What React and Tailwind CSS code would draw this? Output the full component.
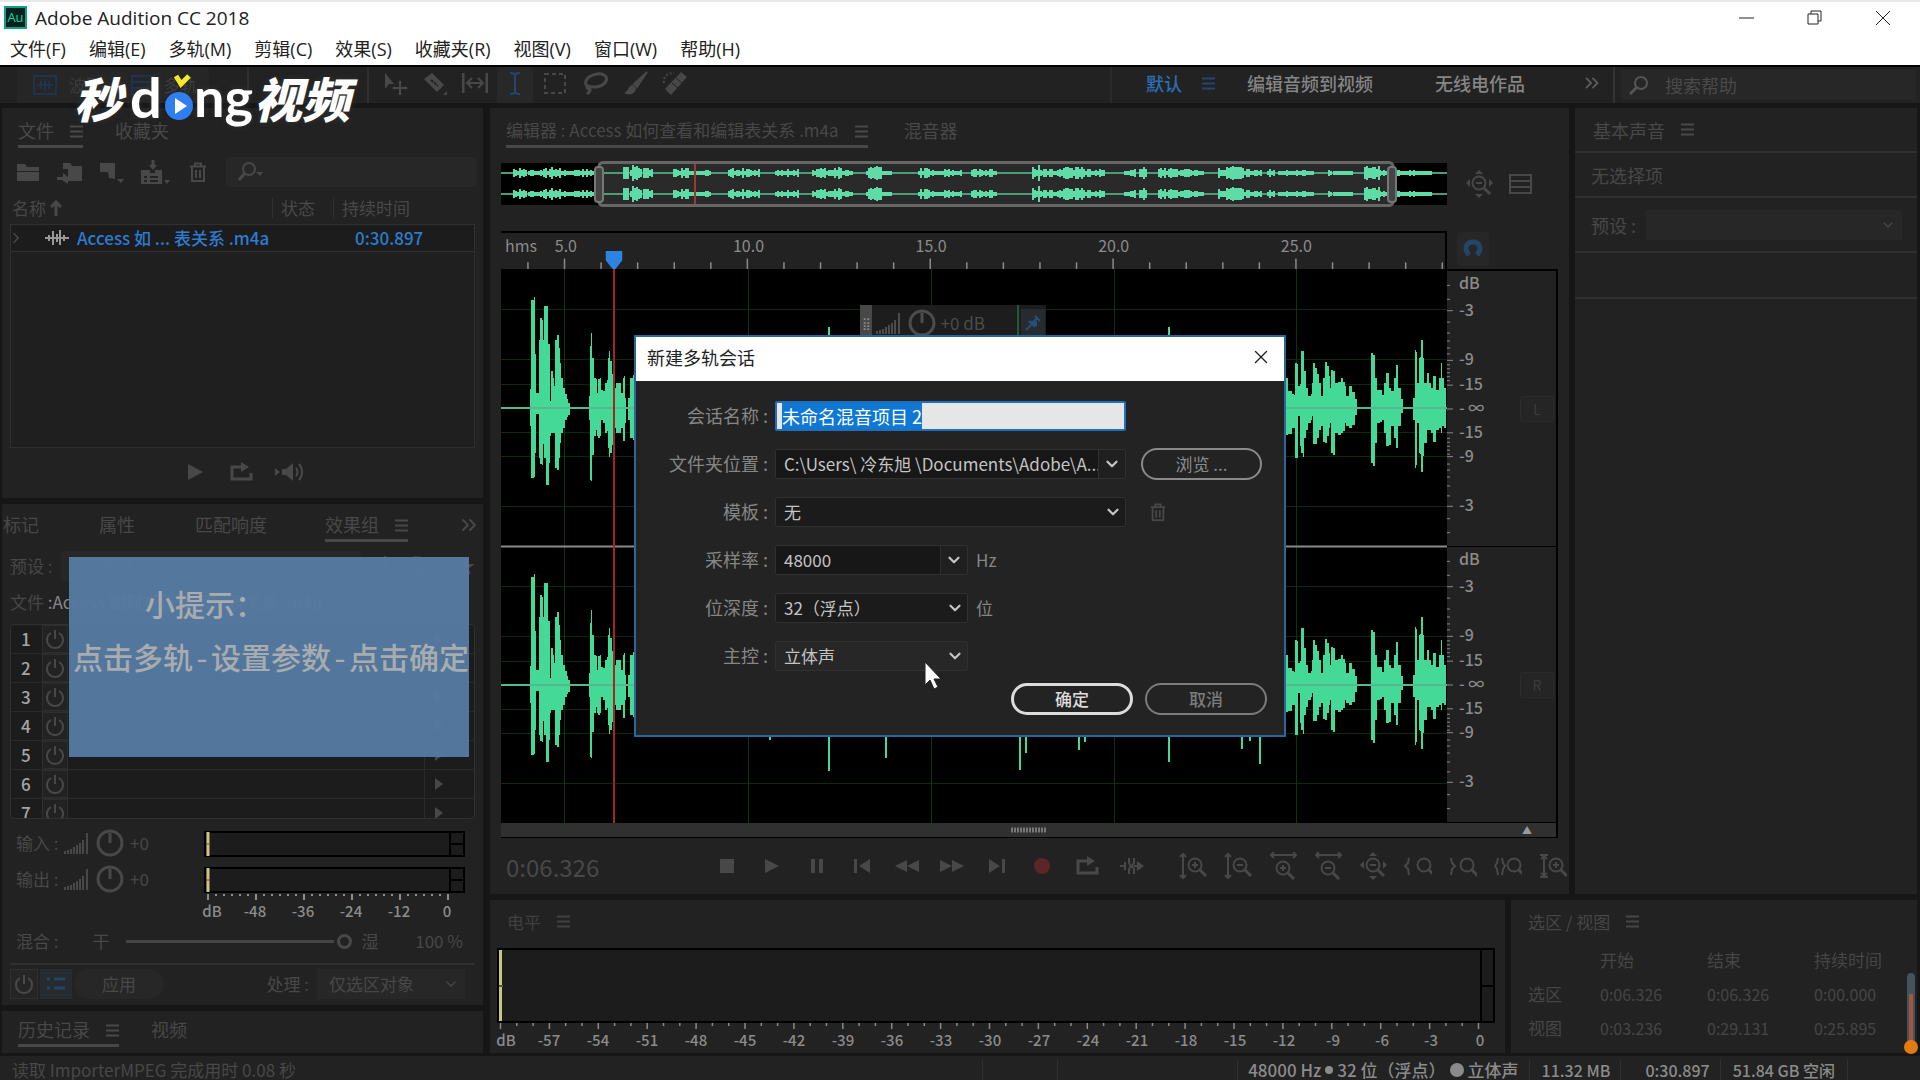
import React, { useEffect, useRef } from 'react';
import { ChevronDown, ChevronRight, ChevronsRight, X } from 'lucide-react';

const menus = ['文件(F)', '编辑(E)', '多轨(M)', '剪辑(C)', '效果(S)', '收藏夹(R)', '视图(V)', '窗口(W)', '帮助(H)'];

// [x, peak above, peak below] in plot units, shared by both channels
const wave = [
  [0, 1, 1], [28, 1, 1], [29, 19, 18], [30, 108, 70], [33, 111, 69], [34, 54, 45], [35, 15, 6], [37, 15, 6], [38, 68, 50],
  [39, 90, 56], [41, 88, 57], [42, 68, 36], [43, 102, 50], [45, 102, 77], [47, 64, 77], [48, 64, 55], [49, 7, 28], [50, 37, 25],
  [52, 30, 25], [53, 22, 25], [54, 68, 60], [56, 73, 62], [58, 60, 50], [59, 45, 35], [60, 30, 25], [62, 20, 20], [64, 14, 12],
  [66, 9, 9], [67, 5, 7], [69, 1, 1], [87, 1, 1], [88, 12, 12], [89, 62, 72], [90, 75, 73], [91, 50, 47], [93, 30, 28], [95, 29, 22],
  [96, 15, 28], [97, 29, 30], [99, 30, 28], [100, 18, 12], [102, 17, 15], [104, 25, 25], [106, 28, 23], [107, 50, 40], [108, 57, 49],
  [109, 47, 45], [111, 34, 37], [112, 30, 30], [114, 20, 20], [115, 25, 25], [119, 25, 25], [120, 15, 20], [122, 30, 33], [123, 32, 33],
  [124, 10, 15], [125, 1, 1], [127, 10, 12], [129, 30, 30], [132, 33, 32], [140, 20, 20], [266, 20, 20], [268, 40, 55], [270, 20, 20],
  [325, 30, 40], [327, 81, 86], [329, 60, 45], [330, 20, 20], [383, 20, 20], [384, 40, 73], [386, 20, 20], [516, 30, 40], [518, 100, 85],
  [520, 40, 30], [524, 40, 68], [526, 30, 30], [575, 20, 20], [577, 40, 65], [579, 20, 20], [583, 30, 57], [585, 20, 20], [666, 20, 20],
  [667, 81, 77], [669, 20, 20], [738, 20, 20], [740, 40, 64], [742, 20, 20], [748, 30, 56], [750, 30, 30], [758, 40, 79], [760, 20, 20],
  [784, 30, 27], [787, 17, 26], [791, 14, 20], [793, 13, 20], [794, 45, 50], [796, 44, 50], [797, 22, 8], [799, 24, 38], [800, 57, 45],
  [802, 57, 49], [803, 37, 30], [805, 20, 22], [807, 12, 15], [810, 14, 12], [811, 25, 8], [812, 45, 36], [814, 40, 36], [816, 34, 30],
  [818, 25, 22], [820, 12, 18], [822, 30, 34], [824, 46, 35], [826, 42, 28], [828, 32, 20], [829, 20, 15], [830, 38, 45], [832, 37, 47],
  [834, 25, 25], [837, 26, 27], [840, 30, 25], [842, 26, 23], [844, 22, 15], [845, 12, 18], [848, 22, 20], [851, 16, 17], [854, 9, 7],
  [856, 1, 1], [869, 1, 1], [870, 55, 55], [872, 53, 58], [874, 30, 35], [876, 18, 15], [879, 18, 14], [881, 13, 12], [883, 25, 25],
  [885, 35, 38], [888, 20, 37], [890, 17, 18], [893, 30, 30], [895, 43, 40], [897, 20, 18], [900, 9, 5], [902, 1, 1], [911, 1, 1],
  [912, 10, 12], [914, 58, 60], [915, 56, 57], [916, 25, 15], [918, 50, 45], [919, 51, 46], [920, 68, 64], [922, 50, 48], [923, 25, 35],
  [926, 35, 22], [928, 25, 22], [930, 20, 25], [932, 32, 34], [935, 18, 22], [938, 30, 20], [940, 45, 25], [941, 30, 18], [943, 20, 20],
  [945, 30, 29],
];

// [start, end, amplitude] of each burst in the overview strip
const bursts = [
  [13, 27, 6], [28, 43, 3], [43, 60, 6], [60, 96, 4], [123, 128, 9], [130, 141, 9], [143, 152, 6], [173, 189, 5], [189, 211, 3],
  [228, 243, 5], [244, 259, 4], [275, 298, 4], [312, 328, 5], [328, 341, 6], [341, 352, 3], [366, 382, 7], [382, 391, 3], [418, 432, 6],
  [432, 461, 4], [471, 496, 4], [532, 541, 9], [541, 561, 5], [561, 591, 6], [591, 605, 4], [624, 636, 4], [639, 647, 6], [658, 677, 6],
  [678, 704, 4], [718, 743, 7], [744, 761, 4], [767, 775, 6], [778, 814, 3], [828, 832, 7], [833, 852, 3], [864, 879, 7], [879, 888, 4],
  [896, 907, 3], [907, 914, 5], [914, 932, 2],
];

const wavePath = (mid) => {
  let top = `M0 ${mid}`;
  let bottom = `M0 ${mid}`;
  wave.forEach(([x, up, down]) => {
    top += `H${x}V${mid - up}`;
    bottom += `H${x}V${mid + down}`;
  });
  return `${top}V${mid}Z${bottom}V${mid}Z`;
};

const overviewPath = (mid) =>
  bursts
    .map(([start, end, amp]) => {
      let d = '';
      for (let x = start; x < end; x += 2) {
        const n = Math.abs(Math.sin(x * 12.9898) * 43758) % 1;
        const h = Math.max(2, Math.round(amp * (0.3 + 0.7 * n)));
        d += `M${x} ${mid - h}V${mid + h}`;
      }
      return d;
    })
    .join('');

const dbMarks = [
  ['-3', 40], ['-9', 90], ['-15', 115], ['- ∞', 139], ['-15', 163], ['-9', 187], ['-3', 237],
];
const dbTicks = [14, 28, 51, 62, 70, 77, 83, 94, 98, 102, 106, 110, 168, 172, 176, 180, 184, 194, 200, 207, 216, 226, 249, 263];

function MenuLines({ className = '' }) {
  return (
    <svg className={`w-[13px] h-[13px] shrink-0 ${className}`} viewBox="0 0 13 13" stroke="currentColor" strokeWidth="2">
      <path d="M0 1.5h13M0 6.5h13M0 11.5h13" />
    </svg>
  );
}

function Tab({ children, active, size = 'text-lg' }) {
  return (
    <button className={`flex items-start gap-4 h-[30px] leading-6 border-b-3 ${size} ${active ? 'border-[#484848]' : 'border-transparent'}`}>
      {children}
      {active && <MenuLines className="mt-[7px]" />}
    </button>
  );
}

function Icon({ children, size = 'size-6', box = '0 0 24 24', className = '' }) {
  return (
    <svg className={`${size} shrink-0 ${className}`} viewBox={box} fill="none" stroke="currentColor" strokeWidth="2">
      {children}
    </svg>
  );
}

function Trash({ className = '' }) {
  return (
    <Icon className={className}>
      <path d="M4 6.5h16M9 6V3.5h6V6M6 7v14h12V7M10 10v8M14 10v8" />
    </Icon>
  );
}

function Power() {
  return (
    <Icon size="size-5" box="0 0 20 20">
      <path d="M6 4a8 8 0 1 0 8 0M10 1v9" />
    </Icon>
  );
}

function Bars() {
  return (
    <svg className="w-6 h-[22px] shrink-0" viewBox="0 0 24 22" stroke="currentColor" strokeWidth="2">
      <path d="M1 22v-3M4 22v-4M7 22v-5M10 22v-7M13 22v-9M16 22v-11M19 22V8M23 22V1" />
    </svg>
  );
}

function Knob() {
  return (
    <Icon size="size-7" box="0 0 28 28" className="ml-2">
      <circle cx="14" cy="14" r="12" strokeWidth="3" />
      <path d="M14 4v10" strokeWidth="3" />
    </Icon>
  );
}

function Loop() {
  return (
    <Icon>
      <path d="M7 7H3v12h19v-6M7 7h7" strokeWidth="3" />
      <path d="M12 2l8 5-8 5z" fill="currentColor" stroke="none" />
    </Icon>
  );
}

function Lens({ cx = 12, sign }) {
  return (
    <>
      <circle cx={cx} cy="13" r="6.5" />
      <path d={`M${cx + 5} 18l6 6`} strokeWidth="3" />
      {sign && <path d={`M${cx - 3} 13h6`} />}
      {sign === '+' && <path d={`M${cx} 10v6`} />}
    </>
  );
}

const zoomTools = [
  { name: '垂直放大', body: <><Lens cx={16} sign="+" /><path d="M4 2v24M1 5l3-3 3 3M1 23l3 3 3-3" /></> },
  { name: '垂直缩小', body: <><Lens cx={16} sign="-" /><path d="M4 2v24M1 5l3-3 3 3M1 23l3 3 3-3" /></> },
  { name: '水平放大', body: <><g transform="translate(0 3)"><Lens cx={14} sign="+" /></g><path d="M2 3h25M5 0L2 3l3 3M24 0l3 3-3 3" /></> },
  { name: '水平缩小', body: <><g transform="translate(0 3)"><Lens cx={14} sign="-" /></g><path d="M2 3h25M5 0L2 3l3 3M24 0l3 3-3 3" /></> },
  { name: '全部缩小', body: <><Lens cx={14} sign="-" /><path d="M14 0l4 4h-8zM14 28l4-4h-8zM1 13l4-4v8zM28 13l-4-4v8z" fill="currentColor" stroke="none" /></> },
  { name: '放大入点', body: <><Lens cx={20} /><path d="M5 6l-1 5-3 3 3 3 1 6" /></> },
  { name: '放大出点', body: <><Lens cx={18} /><path d="M2 6l1 5 3 3-3 3-1 6" /></> },
  { name: '缩放至选区', body: <><Lens cx={20} /><path d="M4 6l-1 5-2 3 2 3 1 6M8 6l1 5 2 3-2 3-1 6" /></> },
  { name: '缩放重置', body: <><Lens cx={17} sign="+" /><path d="M5 3v22M1 3h8M1 25h8M2 7l3-3 3 3M2 21l3 3 3-3" /></> },
];

const transport = [
  { name: '停止', body: <path d="M5 5h14v14H5z" fill="currentColor" stroke="none" /> },
  { name: '播放', body: <path d="M5 5l14 7-14 7z" fill="currentColor" stroke="none" /> },
  { name: '暂停', body: <path d="M6 5h4v14H6zM14 5h4v14h-4z" fill="currentColor" stroke="none" /> },
  { name: '上一个', body: <path d="M4 5h3v14H4zM20 5v14L9 12z" fill="currentColor" stroke="none" /> },
  { name: '快退', body: <path d="M12 6v12L0 12zM24 6v12l-12-6z" fill="currentColor" stroke="none" /> },
  { name: '快进', body: <path d="M0 6v12l12-6zM12 6v12l12-6z" fill="currentColor" stroke="none" /> },
  { name: '下一个', body: <path d="M4 5v14l11-7zM17 5h3v14h-3z" fill="currentColor" stroke="none" /> },
  { name: '录制', body: <circle cx="12" cy="12" r="8" fill="#5c2628" stroke="none" /> },
  { name: '循环播放', body: <><path d="M7 7H3v12h19v-6M7 7h7" strokeWidth="3" /><path d="M12 2l8 5-8 5z" fill="currentColor" stroke="none" /></> },
  { name: '跳过选区', body: <><path d="M0 12h6M5 8v8M9 4v5l2 3-2 3v5M14 4v5l-2 3 2 3v5M14 12h6" /><path d="M17 7l7 5-7 5z" fill="currentColor" stroke="none" /></> },
];

const tools = [
  { name: '移动', body: <><path d="M3 2l9 11H7l-4 5z" fill="currentColor" stroke="none" /><path d="M18 11v12M12 17h12" /><path d="M18 9l2 3h-4zM18 25l2-3h-4zM10 17l3-2v4zM26 17l-3-2v4z" fill="currentColor" stroke="none" /></> },
  { name: '切断', body: <><path d="M2 8l8-6 12 12-7 7z" fill="currentColor" stroke="none" /><path d="M9 9l7 6" stroke="#222222" strokeDasharray="3 1" /><path d="M25 20v4h-4z" fill="currentColor" stroke="none" /></> },
  { name: '滑动', body: <><path d="M1 2v20M25 2v20" strokeWidth="3" /><path d="M5 12h16M10 7l-5 5 5 5M16 7l5 5-5 5" strokeWidth="2" /></> },
  { name: '时间选择', active: true, body: <path d="M8 2c3 0 5 1 5 3 0-2 2-3 5-3M13 5v15M8 23c3 0 5-1 5-3 0 2 2 3 5 3" /> },
  { name: '框选', body: <path d="M3 3h20v19H3z" strokeDasharray="4 3" /> },
  { name: '套索', body: <path d="M9 17c-5-1-7-5-4-9s12-7 17-4 2 9-4 11-9 1-11 0-3 3 0 3 0 3-2 5" strokeWidth="3" /> },
  { name: '画笔', body: <><path d="M25 1L12 13l3 3z" fill="currentColor" /><path d="M11 14c-5 0-4 6-9 8 5 3 12 1 12-5z" fill="currentColor" stroke="none" /></> },
  { name: '修复', body: <><path d="M19 1l6 5L9 24l-6-6z" fill="currentColor" stroke="none" /><path d="M2 12c-1-6 3-10 10-10" strokeDasharray="2 2" /><path d="M14 7l6 5M10 12l6 5" stroke="#222222" strokeWidth="1" /></> },
];

function Meter() {
  return (
    <svg className="block w-full h-[26px]" viewBox="0 0 261 26" preserveAspectRatio="none">
      <path d="M1 1h259v24H1z" fill="#1c1c1c" stroke="#000" strokeWidth="2" />
      <path d="M246 1v24M246 13h14" stroke="#000" strokeWidth="2" />
      <path d="M4 1v24" stroke="#c9c77e" strokeWidth="3" />
      <path d="M2 13h4" stroke="#5a5a35" />
    </svg>
  );
}

function TitleBar() {
  return (
    <header className="bg-white text-[#222] border-t-2 border-[#e8e8e8] shrink-0 font-['Open_Sans','Noto_Sans_CJK_SC',sans-serif]">
      <div className="flex items-center h-[31px] pl-1 pr-[29px]">
        <div className="w-[23px] h-[23px] bg-[#06211c] border-2 border-[#0fa287] text-[#12d6ae] text-[13px] leading-[18px] text-center font-medium">Au</div>
        <h1 className="ml-2 text-[19px] leading-6">Adobe Audition CC 2018</h1>
        <div className="ml-auto flex items-center gap-[52px]">
          <button aria-label="最小化"><Icon size="size-4" box="0 0 16 16"><path d="M0 8h15" strokeWidth="1" /></Icon></button>
          <button aria-label="还原"><Icon size="size-4" box="0 0 16 16"><path d="M1 4h10v10H1zM4 4V1h10v10h-3" strokeWidth="1" /></Icon></button>
          <button aria-label="关闭"><Icon size="size-4" box="0 0 16 16"><path d="M1 1l14 14M15 1L1 15" strokeWidth="1" /></Icon></button>
        </div>
      </div>
      <nav className="flex items-center gap-[3px] h-8 text-lg">
        {menus.map((m) => (
          <button key={m} className="px-[10px]">{m}</button>
        ))}
      </nav>
    </header>
  );
}

function Toolbar() {
  return (
    <div className="flex items-center h-[38px] border-t-2 border-black bg-[#222222] shrink-0 pr-1">
      <div className="flex items-center h-full w-[249px] pl-[17px] border-r-2 border-[#303030]">
        <button className="flex items-center gap-3 h-full px-4 bg-[#262626] text-[#3c3c3c]">
          <Icon className="text-[#1d3350]"><path d="M1 3h22v18H1zM4 12h16M8 8v8M12 6v12M16 8v8" /></Icon>
          波形
        </button>
        <button className="flex items-center gap-2 h-full px-3 bg-[#262626] text-[#3c3c3c]">
          <Icon className="text-[#1d3350]"><path d="M1 3h22v18H1zM1 9h22M1 15h22" /></Icon>
          多轨
        </button>
      </div>
      <div className="flex items-center h-full ml-[118px] pl-2 gap-1 border-l-2 border-[#303030] text-[#484848]">
        {tools.map((t) => (
          <button
            key={t.name}
            aria-label={t.name}
            className={`flex items-center justify-center w-9 h-9 pb-1 ${t.active ? 'bg-[#282828] text-[#23486f]' : ''}`}
          >
            <Icon size="w-[26px] h-6" box="0 0 26 24">{t.body}</Icon>
          </button>
        ))}
      </div>
      <div className="ml-auto flex items-center h-full pl-[34px] border-l-2 border-[#2a2a2a] text-lg leading-6 text-[#858585]">
        <div className="flex items-center pb-1 font-medium">
          <button className="flex items-center gap-5 text-[#2b6fb5]">
            默认
            <MenuLines className="text-[#22476e]" />
          </button>
          <button className="ml-8">编辑音频到视频</button>
          <button className="ml-[62px]">无线电作品</button>
          <button aria-label="更多" className="ml-14 mr-2.5 text-[#5c5c5c]"><ChevronsRight size={22} /></button>
        </div>
        <label className="flex items-center h-full w-[303px] pl-1.5 border-l-2 border-[#333]">
          <span className="flex items-center gap-4 h-[30px] w-full px-2 bg-[#272727] text-[#4a4a4a]">
            <Icon size="size-5" box="0 0 20 20" className="text-[#555]"><circle cx="12" cy="8" r="6" /><path d="M8 12l-7 7" strokeWidth="3" /></Icon>
            <input aria-label="搜索帮助" placeholder="搜索帮助" className="w-full bg-transparent outline-none placeholder:text-[#4a4a4a]" />
          </span>
        </label>
      </div>
    </div>
  );
}

function FilesPanel() {
  return (
    <section className="flex flex-col h-[390px] bg-[#222222] pb-0.5 shrink-0 text-[#484848]">
      <div className="flex items-center gap-[32px] pl-4 pt-[10px]">
        <Tab active>文件</Tab>
        <Tab>收藏夹</Tab>
      </div>
      <div className="flex items-center gap-4 mt-2 h-8 pl-3.5 pr-1.5">
        <button aria-label="打开"><Icon><path d="M1 4h8l2 3h12v4H1zM1 12h22v9H1z" fill="currentColor" stroke="none" /></Icon></button>
        <button aria-label="导入"><Icon size="w-[26px] h-6" box="0 0 26 24"><path d="M7 3h7l2 3h10v15H12v3l-6-4H1v-3h6v-4l5 4V9H7z" fill="currentColor" stroke="none" /></Icon></button>
        <button aria-label="新建"><Icon size="w-[26px] h-6" box="0 0 26 24"><path d="M2 3h15v16l-6-1-1-6H2zM19 19h7l-3 4z" fill="currentColor" stroke="none" /></Icon></button>
        <button aria-label="插入"><Icon size="w-[30px] h-6" box="0 0 30 24"><path d="M1 10h9v3h5v-3h7v14H1zM24 20h6l-3 4zM9 5h8l-4 5z" fill="currentColor" stroke="none" /><path d="M13 0v6" strokeWidth="3" /><path d="M4 17h3M10 17h8M4 21h3M10 21h8" stroke="#222222" /></Icon></button>
        <button aria-label="删除"><Trash /></button>
        <label className="flex items-center flex-1 h-[30px] pl-3 bg-[#272727] rounded-sm">
          <Icon size="w-[26px] h-5" box="0 0 26 20"><circle cx="11" cy="7" r="6" /><path d="M7 11l-6 7" strokeWidth="3" /><path d="M18 10h7l-3 4z" fill="currentColor" stroke="none" /></Icon>
          <input aria-label="搜索文件" className="w-full bg-transparent outline-none" />
        </label>
      </div>
      <table className="mt-1 mx-2 text-left table-fixed border-separate border-spacing-0">
        <thead>
          <tr className="h-8">
            <th className="font-normal pl-0.5">
              <span className="flex items-center gap-1">
                名称
                <Icon size="w-3 h-4" box="0 0 12 16"><path d="M6 16V3M1 7l5-5 5 5" strokeWidth="3" /></Icon>
              </span>
            </th>
            <th className="font-normal w-[61px]"><span className="block pl-2 leading-5 border-l border-[#303030]">状态</span></th>
            <th className="font-normal w-[142px]"><span className="block pl-2 leading-5 border-l border-[#303030]">持续时间</span></th>
          </tr>
        </thead>
        <tbody>
          <tr className="h-[28px] bg-[#1c1c1c] font-medium text-[#2e7bd0]">
            <td className="border-y border-l border-[#303030]">
              <span className="flex items-center">
                <ChevronRight size={18} className="-ml-1 text-[#484848]" />
                <Icon size="w-6 h-5" box="0 0 24 20" className="ml-5 mr-2 text-[#999]"><path d="M0 10h24M4 7v6M8 3v14M12 6v8M15 2v15M19 7v6" /></Icon>
                Access 如 ... 表关系 .m4a
              </span>
            </td>
            <td className="border-y border-[#303030]"></td>
            <td className="border-y border-r border-[#303030] pl-[22px]">0:30.897</td>
          </tr>
        </tbody>
      </table>
      <div className="flex-1 mx-2 border border-t-0 border-[#2e2e2e] bg-[#1f1f1f]"></div>
      <div className="flex items-center justify-center gap-[22px] h-12">
        <button aria-label="播放"><Icon><path d="M5 4l15 8-15 8z" fill="currentColor" stroke="none" /></Icon></button>
        <button aria-label="循环"><Loop /></button>
        <button aria-label="自动播放"><Icon size="w-7 h-6" box="0 0 28 24"><path d="M0 8l5 4-5 4zM7 9h4l7-6v18l-7-6H7z" fill="currentColor" stroke="none" /><path d="M21 8c2 2 2 6 0 8M24 4c4 4 4 12 0 16" /></Icon></button>
      </div>
    </section>
  );
}

function EffectsPanel() {
  return (
    <section className="flex flex-col flex-1 min-h-0 bg-[#222222] text-[#484848]">
      <div className="flex items-center pt-2 pl-px pr-0.5">
        <Tab>标记</Tab>
        <span className="ml-[60px]"><Tab>属性</Tab></span>
        <span className="ml-[60px]"><Tab>匹配响度</Tab></span>
        <span className="ml-[58px]"><Tab active>效果组</Tab></span>
        <button aria-label="更多" className="ml-auto pb-1"><ChevronsRight size={24} /></button>
      </div>
      <label className="flex items-center gap-2 mt-2 h-8 px-2">
        预设 :
        <select aria-label="预设" className="h-[30px] w-[300px] pl-6 appearance-none bg-[#272727]"><option>（默认）</option></select>
        <Icon className="ml-1"><path d="M12 2v12M7 9l5 5 5-5M2 16v6h20v-6" /></Icon>
        <Trash />
        <span className="ml-auto text-xl">★</span>
      </label>
      <p className="mt-1 h-8 px-2 leading-8">文件 <span className="text-[#888]">:Access 如何查看和编辑表关系 .m4a</span></p>
      <ol className="mt-1.5 mx-2 h-[195px] overflow-hidden border border-[#303030] rounded-sm bg-[#1c1c1c] shrink-0">
        {[1, 2, 3, 4, 5, 6, 7].map((n) => (
          <li key={n} className="flex items-center h-[29px] leading-5 border-b border-[#2a2a2a]">
            <span className="w-[28px] pl-2.5 font-medium text-[#a5a5a5]">{n}</span>
            <button aria-label={`开关 ${n}`} className="flex items-center justify-center ml-[3px] w-[26px] h-7 bg-[#222] border border-[#2e2e2e]"><Power /></button>
            <button aria-label={`效果 ${n}`} className="ml-auto mr-[18px] flex items-center w-8 h-full pl-2 border-l border-[#2a2a2a]">
              <Icon size="size-4" box="0 0 16 16"><path d="M2 2l8 6-8 6z" fill="currentColor" stroke="none" /></Icon>
            </button>
          </li>
        ))}
      </ol>
      <div className="flex pl-3.5 pr-[18px] pt-1.5">
        <div className="w-[188px] shrink-0">
          {['输入', '输出'].map((t) => (
            <div key={t} className="flex items-center h-9">
              <span className="w-12">{t} :</span>
              <Bars />
              <Knob />
              <span className="ml-1.5">+0</span>
            </div>
          ))}
        </div>
        <div className="flex-1 pt-1.5 text-[15px] font-medium text-[#8b8b8b]">
          <Meter />
          <div className="h-[10px]"></div>
          <Meter />
          <svg className="block w-full h-2" viewBox="0 0 261 8" preserveAspectRatio="none" stroke="#8b8b8b" strokeWidth="2">
            {Array.from({ length: 31 }, (_, i) => <path key={i} d={`M${4 + i * 8} 1v${i % 6 === 0 ? 6 : 2}`} />)}
          </svg>
          <div className="relative h-5">
            {['dB', '-48', '-36', '-24', '-12', '0'].map((t, i) => (
              <span key={t} className="absolute -translate-x-1/2 leading-5" style={{ left: `${(i === 0 ? 8 : 3 + i * 48) / 2.61}%` }}>{t}</span>
            ))}
          </div>
        </div>
      </div>
      <label className="flex items-center h-9 mt-0.5 pl-3.5 pr-5">
        混合 :
        <span className="ml-[34px]">干</span>
        <span className="relative flex items-center ml-4 w-[228px] h-4">
          <span className="w-[208px] h-[3px] bg-[#444]"></span>
          <span className="ml-[3px] size-[15px] shrink-0 rounded-full border-3 border-[#484848]"></span>
          <input type="range" aria-label="混合" defaultValue="100" className="absolute inset-0 w-full opacity-0" />
        </span>
        <span className="ml-2">湿</span>
        <span className="ml-auto">100 %</span>
      </label>
      <div className="flex items-center mx-2 mt-1 pt-1 border-t-2 border-[#303030]">
        <button aria-label="效果开关" className="flex items-center justify-center w-7 h-[30px] border border-[#303030] bg-[#252525]"><Power /></button>
        <button aria-label="列表" className="flex items-center justify-center ml-0.5 w-8 h-[30px] bg-[#272a2e] text-[#234464]">
          <Icon size="size-5" box="0 0 20 20" ><path d="M1 5h3M8 5h11M1 14h3M8 14h11" strokeWidth="3" /></Icon>
        </button>
        <button className="ml-0.5 w-[90px] h-[30px] rounded-full bg-[#272727]">应用</button>
        <label className="ml-auto mr-2.5 flex items-center gap-2">
          处理 :
          <span className="relative">
            <select className="w-[148px] h-[30px] pl-3 appearance-none bg-[#272727]"><option>仅选区对象</option></select>
            <ChevronDown size={16} className="absolute right-1.5 top-[7px]" />
          </span>
        </label>
      </div>
    </section>
  );
}

function Plot() {
  return (
    <div className="relative flex-1 min-h-0 bg-black">
      <svg className="absolute inset-0 w-full h-full" viewBox="0 0 946 554" preserveAspectRatio="none">
        {[0, 277].map((y) => (
          <path key={y} stroke="#0b2a0d" d={[40, 90, 115, 163, 187, 237].map((v) => `M0 ${y + v + 0.5}H946`).join('')} />
        ))}
        <path stroke="#0e3311" d="M63.5 0V554M247.5 0V554M430.5 0V554M613.5 0V554M795.5 0V554" />
        <path d="M0 277.5H946" stroke="#8a8a8a" strokeWidth="2" />
        <path d={wavePath(139)} fill="#45d998" />
        <path d={wavePath(416)} fill="#45d998" />
        <path d="M0 139H946M0 416H946" stroke="#56b88e" strokeWidth="2" />
        <path d="M113 0V554" stroke="#a3261f" strokeWidth="2" />
      </svg>
      <div className="absolute left-[38%] top-9 flex items-center h-9 w-[186px] bg-[#1d1d1d] text-[#4c4c4c]">
        <span className="flex items-center justify-center w-3 h-full bg-[#484848] text-[#888] text-xs">⣿</span>
        <span className="ml-1"><Bars /></span>
        <Knob />
        <span className="ml-1">+0 dB</span>
        <span className="ml-auto w-0.5 h-full bg-[#1f5a40]"></span>
        <button aria-label="固定" className="ml-0.5 mr-px flex items-center justify-center w-6 h-7 bg-[#272a2e] text-[#24507d]">
          <Icon size="size-4" box="0 0 16 16"><path d="M1 15l5-5M4 6l6 6M7 8l5-5M10 1l5 5M6 7h5v3z" strokeWidth="2" /></Icon>
        </button>
      </div>
    </div>
  );
}

function DbScale() {
  return (
    <div className="flex flex-col w-[111px] border-t-2 border-r-2 border-black text-[#8b8b8b]">
      {['L', 'R'].map((ch) => (
        <div key={ch} className="relative flex-1 border-b border-black">
          <svg className="absolute inset-0 w-2 h-full" viewBox="0 0 8 277" preserveAspectRatio="none" stroke="#8b8b8b">
            <path d={dbTicks.map((y) => `M0 ${y + 0.5}h3`).join('')} />
            <path d={dbMarks.map(([, y]) => `M0 ${y}h6`).join('')} />
          </svg>
          <span className="absolute left-3 top-[5%] -translate-y-[70%] leading-4 text-base font-medium">dB</span>
          {dbMarks.map(([t, y]) => (
            <span key={y} className="absolute left-3 -translate-y-[60%] leading-4 text-base font-medium" style={{ top: `${y / 2.77}%` }}>{t}</span>
          ))}
          <button className="absolute right-0.5 top-1/2 -translate-y-1/2 w-[34px] h-[26px] border border-[#2b2b2b] bg-[#252525] text-[#3c3c3c] text-sm rounded-xs">{ch}</button>
        </div>
      ))}
    </div>
  );
}

function EditorPanel() {
  return (
    <section className="flex flex-col flex-1 min-w-0 bg-[#222222] text-[#484848]">
      <div className="flex items-center gap-9 pl-4 pt-[10px]">
        <Tab active size="text-[17px]">编辑器 : Access 如何查看和编辑表关系 .m4a</Tab>
        <Tab>混音器</Tab>
      </div>
      <div className="flex items-center mt-[13px] pl-[11px] pr-[11px]">
        <svg className="block flex-1 min-w-0 h-[46px]" viewBox="0 0 946 46" preserveAspectRatio="none">
          <path d="M0 2h946v42H0z" fill="#000" />
          <rect x="98" y="1.5" width="794" height="43" rx="4" fill="#2a2a2a" stroke="#666" strokeWidth="3" />
          <path d="M0 12h946M0 33h946" stroke="#4b9c78" strokeWidth="2" />
          <path d={overviewPath(12)} stroke="#5fdba8" strokeWidth="2" />
          <path d={overviewPath(33)} stroke="#5fdba8" strokeWidth="2" />
          <path d="M194 3v40" stroke="#9a3a30" strokeWidth="2" />
          <rect x="94" y="6" width="8" height="35" rx="3" fill="#444" stroke="#777" strokeWidth="2" />
          <rect x="887" y="6" width="8" height="35" rx="3" fill="#444" stroke="#777" strokeWidth="2" />
        </svg>
        <div className="flex items-center gap-4 w-[111px] pl-[18px]">
          <button aria-label="全部缩小"><Icon size="w-7 h-7" box="0 0 28 28">{zoomTools[4].body}</Icon></button>
          <button aria-label="列表视图"><Icon size="w-6 h-6" box="0 0 24 24"><path d="M1 3h21v18H1zM1 9h21M1 15h21" /></Icon></button>
        </div>
      </div>
      <div className="flex mt-6 pl-[11px] pr-[11px]">
        <div className="relative flex-1 min-w-0 h-[38px] border-t-2 border-r-2 border-black text-base text-[#8b8b8b]">
          <svg className="absolute inset-0 w-full h-full" viewBox="0 0 946 38" preserveAspectRatio="none" stroke="#8b8b8b" strokeWidth="1.5">
            {Array.from({ length: 26 }, (_, i) => (
              <path key={i} d={`M${27 + i * 36.65} 38v-${i % 5 === 1 ? 11 : 7}`} />
            ))}
          </svg>
          <span className="absolute left-1 top-0 leading-6">hms</span>
          {['5.0', '10.0', '15.0', '20.0', '25.0'].map((t, i) => (
            <span key={t} className="absolute top-0 -translate-x-1/2 leading-6" style={{ left: `${(65 + i * 183) / 9.46}%` }}>{t}</span>
          ))}
          <svg className="absolute bottom-0 left-[12%] -translate-x-1/2 w-[17px] h-[18px]" viewBox="0 0 17 18">
            <path d="M0 0h17v9l-7 9H7L0 9z" fill="#2d83e0" />
          </svg>
        </div>
        <div className="w-[111px] pl-2.5">
          <button aria-label="对齐" className="flex items-center justify-center w-8 h-[34px] mt-px bg-[#272727] text-[#22456a] rounded-sm">
            <Icon size="size-5" box="0 0 20 20"><path d="M6 16c-6-7-2-13 4-13s10 6 4 13" strokeWidth="5" /></Icon>
          </button>
        </div>
      </div>
      <div className="flex flex-1 min-h-0 mx-[11px]">
        <Plot />
        <DbScale />
      </div>
      <div className="flex items-center justify-center relative h-[15px] mx-[11px] bg-[#303030] border-b border-r-2 border-black">
        <svg className="w-9 h-[6px]" viewBox="0 0 36 6" stroke="#777" strokeWidth="5" strokeDasharray="2 1"><path d="M0 3h36" /></svg>
        <span className="absolute right-6 top-0 text-[10px] leading-[13px] text-[#999]">▲</span>
      </div>
      <div className="flex items-center h-14 pl-4">
        <output className="text-2xl pt-0.5">0:06.326</output>
        <div className="flex items-center gap-[13px] ml-auto">
          {transport.map((b) => (
            <button key={b.name} aria-label={b.name} className="flex justify-center w-8"><Icon>{b.body}</Icon></button>
          ))}
        </div>
        <div className="flex items-center gap-[13px] ml-[29px]">
          {zoomTools.map((b) => (
            <button key={b.name} aria-label={b.name} className="flex justify-center w-8"><Icon size="w-7 h-7" box="0 0 28 28">{b.body}</Icon></button>
          ))}
        </div>
      </div>
    </section>
  );
}

function SoundPanel() {
  return (
    <section className="w-[342px] shrink-0 bg-[#222222] text-[#484848] text-lg leading-6">
      <div className="flex items-center gap-4 h-[45px] pl-[18px] border-b-2 border-[#303030]">基本声音 <MenuLines /></div>
      <div className="flex items-center h-[45px] pl-4 border-b-2 border-[#303030]">无选择项</div>
      <label className="flex items-center gap-2.5 h-[55px] pl-4 pr-[15px] border-b-2 border-[#303030]">
        预设 :
        <span className="relative flex-1">
          <select className="block w-full h-[30px] appearance-none bg-[#272727]"><option></option></select>
          <ChevronDown size={16} className="absolute right-1.5 top-[7px]" />
        </span>
      </label>
      <div className="h-[46px] border-b-2 border-[#303030]"></div>
    </section>
  );
}

function LevelPanel() {
  return (
    <section className="flex-1 min-w-0 bg-[#222222] pl-[7px] pr-[10px]">
      <div className="flex items-center gap-4 h-[43px] pl-2.5 text-[#404040]">电平 <MenuLines /></div>
      <svg className="block mt-[5px] w-full h-[83px]" viewBox="0 0 998 83" preserveAspectRatio="none">
        <path d="M1 1h996v73H1z" fill="#1c1c1c" stroke="#000" strokeWidth="2" />
        <path d="M984 1v73M984 38h13" stroke="#000" strokeWidth="2" />
        <path d="M3.5 2v71" stroke="#c9c77e" strokeWidth="3" />
        <path d="M2 38h4" stroke="#5a5a35" strokeWidth="2" />
        {Array.from({ length: 61 }, (_, i) => (
          <path key={i} d={`M${3.5 + i * 16.3} 75v${i % 3 === 0 ? 6 : 3}`} stroke="#8b8b8b" strokeWidth="1.5" />
        ))}
      </svg>
      <div className="relative h-[18px] text-[15px] font-medium text-[#8b8b8b]">
        {Array.from({ length: 21 }, (_, i) => (
          <span key={i} className="absolute -translate-x-1/2 leading-[18px]" style={{ left: `${(i === 0 ? 9 : 3 + i * 49) / 9.98}%` }}>
            {i === 0 ? 'dB' : i * 3 - 60}
          </span>
        ))}
      </div>
    </section>
  );
}

function SelectionPanel() {
  return (
    <section className="w-[406px] shrink-0 bg-[#222222] pl-[17px] text-[#464646]">
      <div className="flex items-center gap-4 h-[43px]">选区 / 视图 <MenuLines /></div>
      <table className="w-full text-left table-fixed leading-5">
        <thead>
          <tr className="h-[34px]">
            <th className="w-[72px]"></th>
            <th className="font-normal w-[107px]">开始</th>
            <th className="font-normal w-[107px]">结束</th>
            <th className="font-normal">持续时间</th>
          </tr>
        </thead>
        <tbody className="text-base leading-5">
          <tr className="h-[34px]">
            <th className="font-normal text-[17px]">选区</th><td>0:06.326</td><td>0:06.326</td><td>0:00.000</td>
          </tr>
          <tr className="h-[34px]">
            <th className="font-normal text-[17px]">视图</th><td>0:03.236</td><td>0:29.131</td><td>0:25.895</td>
          </tr>
        </tbody>
      </table>
    </section>
  );
}

function StatusBar() {
  return (
    <footer className="flex items-center h-6 pt-1 bg-[#222222] pl-3 pr-[72px] leading-5 text-[#484848] shrink-0">
      <span>读取 ImporterMPEG 完成用时 0.08 秒</span>
      <div className="ml-auto flex items-center font-medium text-base leading-5 text-[#8b8b8b]">
        <span className="h-5 w-[75px] border-l border-[#303030]"></span>
        <span className="h-5 w-[180px] border-l border-[#303030]"></span>
        <span className="flex items-center gap-1 px-2.5 border-l border-[#303030] whitespace-nowrap text-[17px]">
          48000 Hz <i className="size-2 rounded-full bg-[#8b8b8b]"></i> 32 位（浮点）
          <i className="size-3.5 rounded-full bg-[#8b8b8b]"></i> 立体声
        </span>
        <span className="pl-3 pr-2.5 border-l border-[#303030]">11.32 MB</span>
        <span className="pl-6 pr-2.5 border-l border-[#303030]">0:30.897</span>
        <span className="px-3 border-x border-[#303030]">51.84 GB 空闲</span>
      </div>
    </footer>
  );
}

function Drop({ id, value, width, dark }) {
  return (
    <span className={`relative ${width}`}>
      <select id={id} className={`block w-full h-[30px] pl-2 appearance-none border border-[#303030] rounded-xs text-[#c4c4c4] ${dark ? 'bg-[#1b1b1b]' : 'bg-[#272727]'}`}>
        <option>{value}</option>
      </select>
      <ChevronDown size={18} strokeWidth={3} className="absolute right-1 top-1.5 text-[#c4c4c4] pointer-events-none" />
    </span>
  );
}

function Combo({ id, value, width }) {
  return (
    <span className={`flex h-[30px] border border-[#303030] rounded-xs text-[#c4c4c4] ${width}`}>
      <input id={id} defaultValue={value} className="flex-1 min-w-0 pl-2 bg-[#171717] outline-none" />
      <button type="button" aria-label="展开" className="flex items-center justify-center w-[27px] border-l border-[#303030] bg-[#1f1f1f]">
        <ChevronDown size={18} strokeWidth={3} />
      </button>
    </span>
  );
}

function Row({ label, id, children }) {
  return (
    <div className="flex items-center h-[30px]">
      <label htmlFor={id} className="w-[132px] mr-[7px] pb-0.5 text-right text-lg leading-6 text-[#868686]">{label} :</label>
      {children}
    </div>
  );
}

function SessionDialog() {
  const nameRef = useRef(null);

  useEffect(() => {
    nameRef.current.focus();
    nameRef.current.select();
  }, []);

  return (
    <div className="absolute inset-0 flex items-center justify-center pb-2">
      <form role="dialog" aria-label="新建多轨会话" className="relative w-[652px] border-2 border-[#2c6799] bg-[#232323]" onSubmit={(e) => e.preventDefault()}>
        <div className="flex items-center justify-between h-11 pl-[11px] pr-3 pb-1 bg-white text-[#222] text-lg">
          新建多轨会话
          <button type="button" aria-label="关闭"><X size={22} strokeWidth={1.5} /></button>
        </div>
        <div className="flex flex-col gap-[18px] pt-5">
          <Row label="会话名称" id="name">
            <input
              id="name"
              ref={nameRef}
              defaultValue="未命名混音项目 2"
              className="w-[351px] h-[30px] pl-[5px] bg-[#e6e6e6] border-2 border-[#1f6fbf] rounded-xs text-lg leading-6 text-[#222] outline-none selection:bg-[#0f78d4] selection:text-white"
            />
          </Row>
          <Row label="文件夹位置" id="path">
            <Combo id="path" value={'C:\\Users\\ 冷东旭 \\Documents\\Adobe\\A...'} width="w-[351px]" />
            <button type="button" className="ml-[15px] w-[121px] h-8 rounded-full border-2 border-[#8a8a8a] text-[#8a8a8a]">浏览 ...</button>
          </Row>
          <Row label="模板" id="template">
            <Drop id="template" value="无" width="w-[351px]" dark />
            <button type="button" aria-label="删除模板" className="ml-5 text-[#484848]"><Trash className="scale-90" /></button>
          </Row>
          <Row label="采样率" id="rate">
            <Combo id="rate" value="48000" width="w-[193px]" />
            <span className="ml-2 text-[#868686]">Hz</span>
          </Row>
          <Row label="位深度" id="depth">
            <Drop id="depth" value="32（浮点）" width="w-[193px]" dark />
            <span className="ml-2 text-[#868686]">位</span>
          </Row>
          <Row label="主控" id="master">
            <Drop id="master" value="立体声" width="w-[193px]" />
          </Row>
        </div>
        <div className="flex justify-end gap-3 pt-3 pb-5 pr-[17px] font-medium">
          <button type="submit" className="w-[122px] h-8 rounded-full border-3 border-[#dcdcdc] text-[#dcdcdc]">确定</button>
          <button type="button" className="w-[122px] h-8 rounded-full border-2 border-[#7c7c7c] text-[#7c7c7c]">取消</button>
        </div>
        <svg className="absolute left-[288px] top-[324px] w-[18px] h-[30px]" viewBox="0 0 18 30">
          <path d="M1 1v23l5-5 4 9 4-2-4-8h7z" fill="#fff" stroke="#222" />
        </svg>
      </form>
    </div>
  );
}

function Watermark() {
  return (
    <div className="absolute left-[74px] top-[67px] flex items-center h-[60px] font-black italic text-white text-[48px] leading-[60px] [text-shadow:0_0_6px_#333]">
      <span className="w-[56px]">秒</span>
      <span className="w-[34px] text-[56px] not-italic font-bold font-[Lato,sans-serif]">d</span>
      <svg className="w-[30px] h-[60px] shrink-0" viewBox="0 0 30 60">
        <path d="M12 9l5 8 8-8" fill="none" stroke="#f7e92a" strokeWidth="5" />
        <circle cx="15" cy="39" r="14" fill="#2f7ff0" />
        <path d="M11 31l12 8-12 8z" fill="#fff" />
      </svg>
      <span className="w-[60px] text-[54px] not-italic font-bold font-[Lato,sans-serif]">ng</span>
      <span>视频</span>
    </div>
  );
}

function Tip() {
  return (
    <aside className="absolute left-[69px] top-[557px] w-[400px] h-[200px] pl-1 pt-[26px] bg-[#567ba1]/97 text-[#a9acae] text-[30px] leading-[57px] font-medium whitespace-nowrap font-['Liberation_Mono','Noto_Sans_CJK_SC',monospace]">
      <p className="pl-[72px] leading-[50px]">小提示：</p>
      <p>点击多轨-设置参数-点击确定</p>
    </aside>
  );
}

export default function App() {
  return (
    <div className="relative flex flex-col h-screen overflow-hidden bg-[#161616] text-[17px] leading-6 font-['Noto_Sans_CJK_SC',sans-serif]">
      <TitleBar />
      <Toolbar />
      <main className="flex flex-1 min-h-0 gap-[7px] pt-[5px] pb-[3px] pl-0.5 pr-[3px]">
        <div className="flex flex-col gap-1.5 w-[481px] shrink-0">
          <FilesPanel />
          <EffectsPanel />
          <section className="flex items-start gap-8 h-[42px] pl-4 pt-1.5 bg-[#222222] text-[#484848] shrink-0">
            <Tab active>历史记录</Tab>
            <Tab>视频</Tab>
          </section>
        </div>
        <div className="flex flex-col flex-1 min-w-0 gap-1.5">
          <div className="flex flex-1 min-h-0 gap-1.5">
            <EditorPanel />
            <SoundPanel />
          </div>
          <div className="flex h-[153px] gap-1.5 shrink-0">
            <LevelPanel />
            <SelectionPanel />
          </div>
        </div>
      </main>
      <StatusBar />
      <Tip />
      <Watermark />
      <SessionDialog />
      <svg className="absolute right-0 bottom-[24px] w-[18px] h-[84px]" viewBox="0 0 18 84">
        <path d="M9 5v70" stroke="#43525c" strokeWidth="8" strokeLinecap="round" />
        <path d="M9 22v50" stroke="#a4553f" strokeWidth="4" />
        <circle cx="9" cy="75" r="7" fill="#e07c12" />
      </svg>
    </div>
  );
}
